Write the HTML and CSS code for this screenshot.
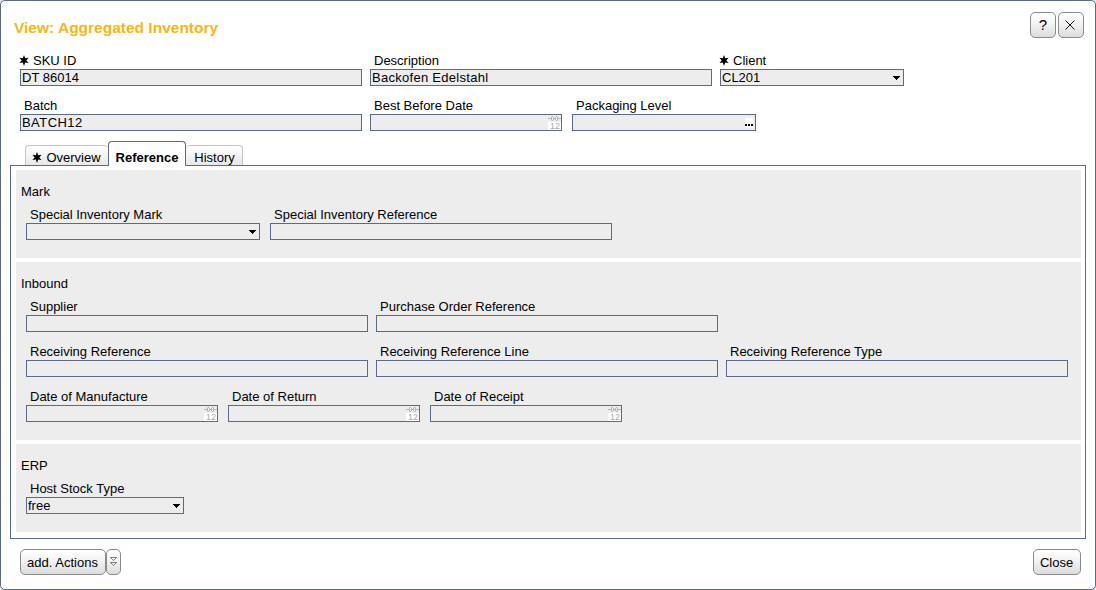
FILE: index.html
```html
<!DOCTYPE html>
<html lang="en">
<head>
<meta charset="utf-8">
<title>View: Aggregated Inventory</title>
<link rel="stylesheet" href="styles.css">
</head>
<body>
<svg class="defs" width="0" height="0" aria-hidden="true">
  <symbol id="star" viewBox="0 0 10 11"><path d="M5 0L6.2 3.3L9.6 2.7L7.3 5.5L9.6 8.1L6.2 7.6L5 11L3.8 7.6L.4 8.1L2.7 5.5L.4 2.7L3.8 3.3Z"/></symbol>
  <symbol id="arrow" viewBox="0 0 7 4"><path d="M0 0h7v1h-1v1h-1v1h-1v1h-1v-1h-1v-1h-1v-1h-1z"/></symbol>
  <symbol id="calendar" viewBox="0 0 13 15">
    <path fill="#fff" d="M0 7h13v8H0z"/>
    <path fill="none" stroke="#b5b5b5" d="M0 3.500h3M5 3.500h3M10 3.500h3M3.500 1.500v4M9.500 1.500v4M4 1.500h1M8 1.500h1M5.500 2v3M7.500 2v3M4 5.500h1M8 5.500h1"/>
  </symbol>
</svg>
<main class="dialog">
  <header class="header">
    <h1 class="title">View: Aggregated Inventory</h1>
    <div class="tools">
      <button class="btn btn-square btn-help">?</button>
      <button class="btn btn-square btn-dismiss"><svg width="10" height="10" viewBox="0 0 10 10"><path d="M.5 .5l9 9M9.500 .5l-9 9" fill="none" stroke="#111" stroke-width="1"/></svg></button>
    </div>
  </header>

  <section class="rows keys">
    <div class="row">
      <div class="field w-long"><label class="label required"><svg class="star"><use href="#star"/></svg>SKU ID</label><div class="box">DT 86014</div></div>
      <div class="field w-long"><label class="label">Description</label><div class="box spaced">Backofen Edelstahl</div></div>
      <div class="field w-medium"><label class="label required"><svg class="star"><use href="#star"/></svg>Client</label><div class="box">CL201<svg class="arrow"><use href="#arrow"/></svg></div></div>
    </div>
    <div class="row">
      <div class="field w-long"><label class="label">Batch</label><div class="box spaced-more">BATCH12</div></div>
      <div class="field w-date"><label class="label">Best Before Date</label><div class="box"><span class="calendar"><svg><use href="#calendar"/></svg><span>12</span></span></div></div>
      <div class="field w-medium after-date"><label class="label">Packaging Level</label><div class="box"><span class="dots"><i></i><i></i><i></i></span></div></div>
    </div>
  </section>

  <nav class="tabs">
    <div class="tab tab-overview"><svg class="star"><use href="#star"/></svg>Overview</div>
    <div class="tab tab-active">Reference</div>
    <div class="tab tab-history">History</div>
  </nav>

  <div class="panel">
    <section class="group">
      <h2 class="group-title">Mark</h2>
      <div class="rows">
        <div class="row row-wide">
          <div class="field w-mark"><label class="label">Special Inventory Mark</label><div class="box"><svg class="arrow"><use href="#arrow"/></svg></div></div>
          <div class="field w-long"><label class="label">Special Inventory Reference</label><div class="box"></div></div>
        </div>
      </div>
    </section>
    <section class="group">
      <h2 class="group-title">Inbound</h2>
      <div class="rows">
        <div class="row">
          <div class="field w-long"><label class="label">Supplier</label><div class="box"></div></div>
          <div class="field w-long"><label class="label">Purchase Order Reference</label><div class="box"></div></div>
        </div>
        <div class="row">
          <div class="field w-long"><label class="label">Receiving Reference</label><div class="box"></div></div>
          <div class="field w-long"><label class="label">Receiving Reference Line</label><div class="box"></div></div>
          <div class="field w-long"><label class="label">Receiving Reference Type</label><div class="box"></div></div>
        </div>
        <div class="row row-wide">
          <div class="field w-date"><label class="label">Date of Manufacture</label><div class="box"><span class="calendar"><svg><use href="#calendar"/></svg><span>12</span></span></div></div>
          <div class="field w-date"><label class="label">Date of Return</label><div class="box"><span class="calendar"><svg><use href="#calendar"/></svg><span>12</span></span></div></div>
          <div class="field w-date"><label class="label">Date of Receipt</label><div class="box"><span class="calendar"><svg><use href="#calendar"/></svg><span>12</span></span></div></div>
        </div>
      </div>
    </section>
    <section class="group">
      <h2 class="group-title">ERP</h2>
      <div class="rows">
        <div class="row">
          <div class="field w-stock"><label class="label">Host Stock Type</label><div class="box">free<svg class="arrow"><use href="#arrow"/></svg></div></div>
        </div>
      </div>
    </section>
  </div>

  <footer class="footer">
    <div class="split">
      <button class="btn btn-text btn-actions">add. Actions</button>
      <button class="btn btn-more"><svg width="7" height="10" viewBox="0 0 7 10"><path d="M0 .5h7M.5 .5l3 3l3-3M0 5.500h7M.5 5.500l3 3l3-3" fill="none" stroke="#666" stroke-width=".8"/></svg></button>
    </div>
    <button class="btn btn-text btn-close">Close</button>
  </footer>
</main>
</body>
</html>
```

FILE: styles.css
```css
* { box-sizing: border-box; }
body {
  margin: 0;
  background: #e4e4e8;
  font: 13px/16px "Liberation Sans", Arial, sans-serif;
  color: #000;
}
.defs { display: block; height: 0; }
.dialog {
  width: 1096px;
  height: 590px;
  background: #fff;
  border: 1px solid #5c6988;
  border-radius: 5px;
}
.header {
  display: flex;
  justify-content: space-between;
  height: 51px;
  padding: 11px 11px 0 13px;
}
.title {
  margin: 5px 0 0;
  font-size: 15.5px;
  line-height: 21px;
  letter-spacing: 0;
  height: 21px;
  color: #f8b617;
}
.tools { display: flex; gap: 2px; }
.btn {
  height: 26px;
  padding: 0;
  border: 1px solid #8a8a8a;
  border-radius: 5px;
  background: linear-gradient(#fff, #f3f3f3 45%, #dcdcdc);
  font: 13px/16px "Liberation Sans", Arial, sans-serif;
  color: #000;
  display: flex;
  align-items: center;
  justify-content: center;
}
.btn-square { width: 26px; }
.btn-help { font-size: 15px; }
.btn-dismiss { padding: 0 2px 1px 0; }
.btn-text { padding: 2px 1px 0 0; }
.rows { display: flex; flex-direction: column; gap: 11px; }
.keys { padding-left: 19px; }
.row { display: flex; gap: 8px; }
.row-wide { gap: 10px; }
.w-long { width: 342px; }
.w-medium { width: 184px; }
.w-date { width: 192px; }
.w-mark { width: 234px; }
.w-stock { width: 158px; }
.after-date { margin-left: 2px; }
.label {
  display: flex;
  align-items: center;
  height: 17px;
  padding-left: 4px;
  white-space: nowrap;
}
.required { padding-left: 0; }
.star { width: 10px; height: 11px; margin: 0 4px 0 -1px; flex: none; }
.box {
  display: flex;
  align-items: center;
  height: 17px;
  padding: 0 0 0 1px;
  border: 1px solid #5c6988;
  background: #ededed;
  line-height: 15px;
}
.spaced { letter-spacing: 0.28px; }
.spaced-more { letter-spacing: 0.45px; }
.arrow { width: 7px; height: 4px; margin: 1px 3px 0 auto; }
.calendar {
  display: grid;
  width: 13px;
  height: 15px;
  margin-left: auto;
}
.calendar > * { grid-area: 1 / 1; }
.calendar svg { width: 13px; height: 15px; }
.calendar span {
  align-self: end;
  padding-left: 2px;
  font-size: 9px;
  line-height: 8px;
  color: #a5a5a5;
}
.dots {
  display: flex;
  align-items: flex-end;
  gap: 1px;
  width: 8px;
  height: 10px;
  margin: 1px 2px 0 auto;
  padding-bottom: 2px;
  background: #fff;
}
.dots i { width: 2px; height: 2px; background: #000; }
.tabs {
  display: flex;
  align-items: flex-end;
  height: 25px;
  margin: 10px 0 -1px 24px;
  position: relative;
}
.tab {
  display: flex;
  align-items: center;
  justify-content: center;
  height: 20px;
  margin-bottom: 1px;
  padding-top: 4px;
  border: 1px solid #c4c4c4;
  border-bottom: 0;
  border-radius: 4px 4px 0 0;
  background: linear-gradient(#fff, #e8e8e8);
}
.tab-overview { width: 83px; border-right: 0; }
.tab-active {
  width: 78px;
  height: 25px;
  margin-bottom: 0;
  padding-top: 8px;
  border-color: #5c6988;
  background: #fff;
  font-weight: bold;
}
.tab-history { width: 57px; border-left: 0; padding-left: 1px; }
.panel {
  display: flex;
  flex-direction: column;
  gap: 4px;
  width: 1076px;
  height: 374px;
  margin-left: 9px;
  padding: 4px 4px 0 5px;
  border: 1px solid #5c6988;
}
.group { padding: 14px 0 18px 10px; background: #ededed; }
.group-title {
  margin: 0 0 6px -5px;
  font-size: 13px;
  font-weight: normal;
  line-height: 16px;
}
.footer {
  display: flex;
  justify-content: space-between;
  padding: 10px 14px 0 19px;
}
.split { display: flex; }
.btn-actions { width: 86px; }
.btn-more { width: 15px; }
.btn-close { width: 48px; }
```
